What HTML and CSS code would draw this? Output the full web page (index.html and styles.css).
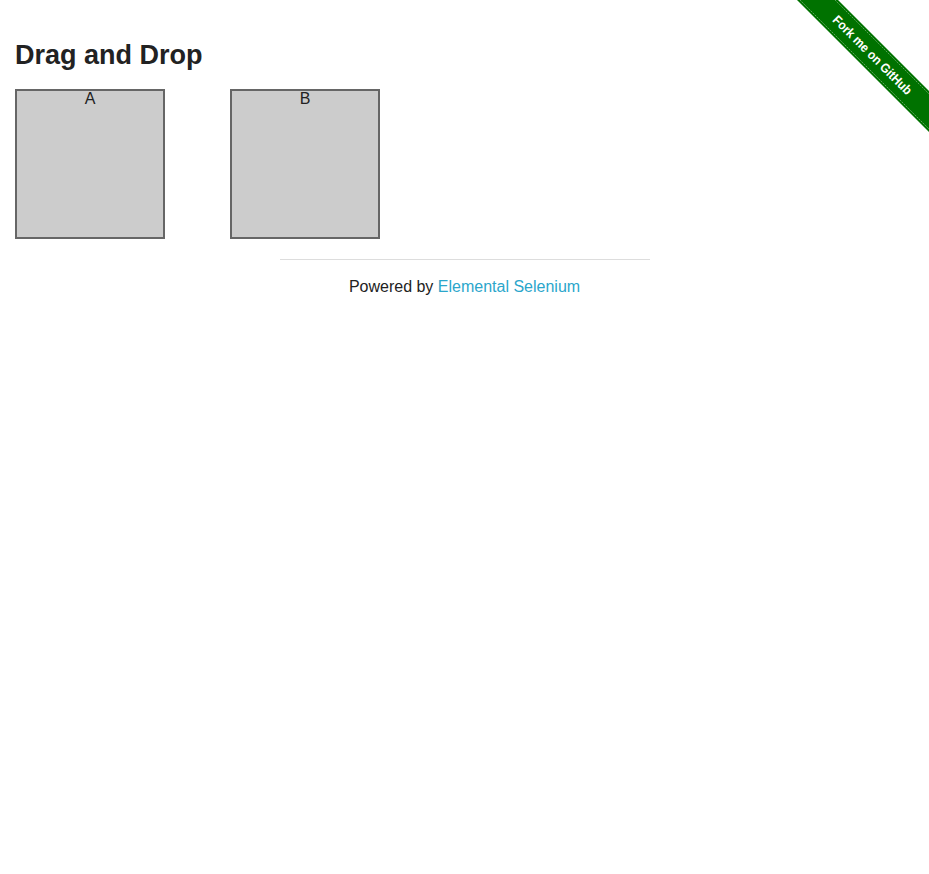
FILE: index.html
```html
<!DOCTYPE html>
<html>
<head>
<meta charset="utf-8">
<title>The Internet</title>
<link rel="stylesheet" href="styles.css">
</head>
<body>
<a class="ribbon" href="#">
  <svg width="149" height="149" viewBox="0 0 149 149">
    <polygon points="17,0 58,0 149,91 149,132" fill="#007200"/>
    <line x1="20" y1="0" x2="149" y2="129" stroke="rgba(255,255,255,0.35)" stroke-width="1" stroke-dasharray="2 1"/>
    <line x1="55" y1="0" x2="149" y2="94" stroke="rgba(255,255,255,0.35)" stroke-width="1" stroke-dasharray="2 1"/>
    <text x="92.5" y="59.5" transform="rotate(45 92.5 55)" text-anchor="middle" class="ribbon-text" textLength="106" lengthAdjust="spacingAndGlyphs">Fork me on GitHub</text>
  </svg>
</a>
<div class="row">
  <div class="example">
    <h3 class="title">Drag and Drop</h3>
    <div class="columns">
      <div class="column"><header class="col-head">A</header></div>
      <div class="column"><header class="col-head">B</header></div>
    </div>
  </div>
</div>
<div class="footer">
  <hr class="rule">
  <div class="powered">Powered by <a class="link" href="#">Elemental Selenium</a></div>
</div>
</body>
</html>
```
FILE: styles.css
```css
html, body {
  margin: 0;
  padding: 0;
  background: #fff;
  font-family: "Liberation Sans", Arial, Helvetica, sans-serif;
  color: #222;
  font-size: 16px;
}
.ribbon {
  position: absolute;
  top: 0;
  right: 0;
  width: 149px;
  height: 149px;
  display: block;
}
.ribbon svg {
  display: block;
}
.ribbon-text {
  fill: #fff;
  font-family: "Liberation Sans", Arial, sans-serif;
  font-weight: bold;
  font-size: 13px;
}
.row {
  padding: 0 15px;
}
.title {
  margin: 39px 0 18px;
  font-size: 27px;
  line-height: 32px;
  font-weight: bold;
  color: #222;
}
.columns {
  display: flex;
  gap: 65px;
}
.column {
  box-sizing: border-box;
  width: 150px;
  height: 150px;
  border: 2px solid #666;
  background: #ccc;
  text-align: center;
}
.col-head {
  display: block;
  font-size: 16px;
  line-height: 16px;
  color: #222;
}
.footer {
  width: 370px;
  margin: 20px auto 0;
  text-align: center;
}
.rule {
  margin: 0;
  border: 0;
  border-top: 1px solid #ddd;
  height: 0;
}
.powered {
  margin-top: 14px;
  line-height: 25.6px;
}
.link {
  color: #2ba6cb;
  text-decoration: none;
}
```
